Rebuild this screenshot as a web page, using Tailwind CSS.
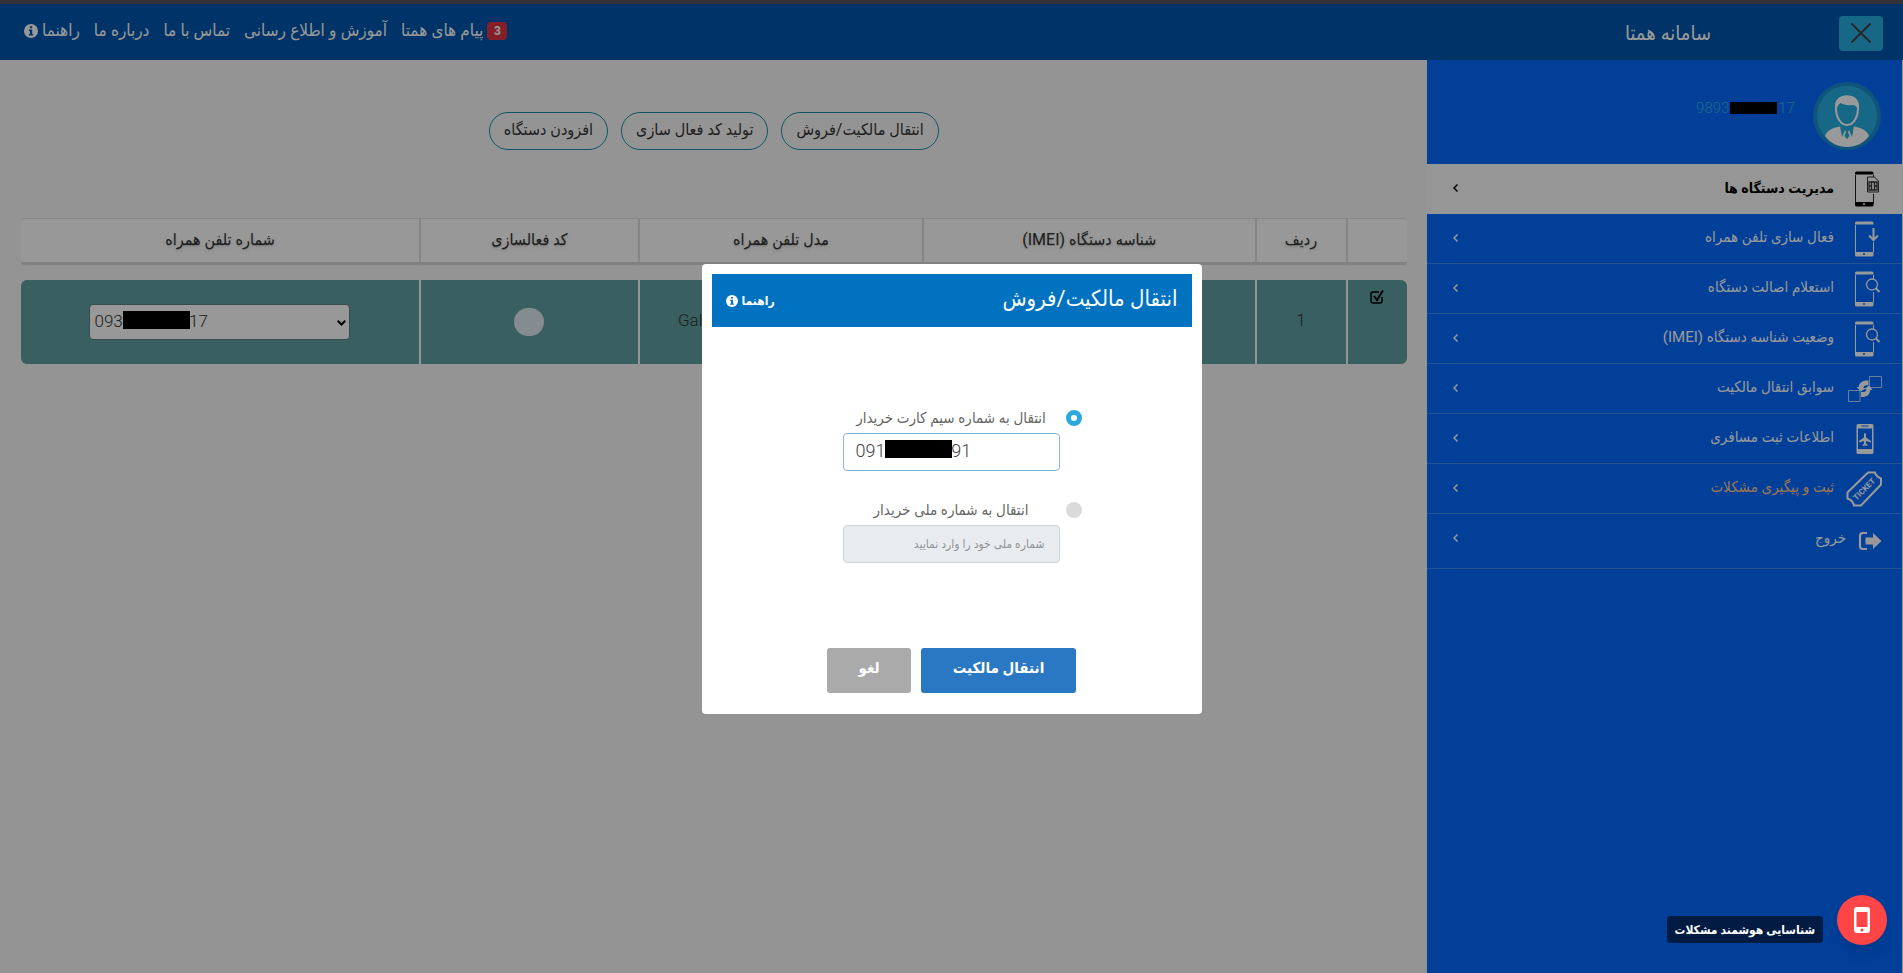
<!DOCTYPE html>
<html lang="fa" dir="rtl">
<head>
    <meta charset="UTF-8">
    <meta name="viewport" content="width=device-width, initial-scale=1.0">
    <title>سامانه همتا</title>
    <script src="https://cdn.jsdelivr.net/npm/@tailwindcss/browser@4"></script>
    <style>
        body {
            font-family: Roboto, 'DejaVu Sans Condensed', 'DejaVu Sans', sans-serif;
        }
    </style>
</head>
<body class="min-h-screen flex flex-col bg-[#f7f7f7] text-[15px] text-[#333]">
    <!-- Top bar -->
    <header class="flex h-[60px] shrink-0 border-t-4 border-[#55555c] bg-[#0055ac] text-white">
        <div class="w-1/4 flex items-center pt-0.5 pr-5">
            <button type="button" aria-label="بستن منو" class="flex h-[35px] w-11 items-center justify-center rounded bg-[#27aee0]">
                <svg class="size-5" viewBox="0 0 20 20" fill="none" stroke="#444" stroke-width="2"><path d="M0.500 0.500L19.500 19.500M19.500 0.500L0.500 19.500"/></svg>
            </button>
            <h1 class="mr-32 text-xl">سامانه همتا</h1>
        </div>
        <nav class="flex flex-1 items-center justify-end gap-3.5 pl-6 pb-0.5 text-[17px]">
            <a href="#" class="flex items-center gap-1">
                <span class="flex h-[18px] w-5 items-center justify-center rounded bg-[#dc3545] text-xs font-bold">3</span>
                پیام های همتا
            </a>
            <a href="#">آموزش و اطلاع رسانی</a>
            <a href="#">تماس با ما</a>
            <a href="#">درباره ما</a>
            <a href="#" class="flex items-center gap-1">
                راهنما
                <svg class="size-[14px]" viewBox="0 0 14 14"><circle cx="7" cy="7" r="7" fill="#fff"/><path d="M5.800 2.200h2.400v2H5.800zM4.900 5.400h3.300v4.600h1v1.500H4.900V10h1V6.900h-1z" fill="#0055ac"/></svg>
            </a>
        </nav>
    </header>

    <div class="flex flex-1 pr-px">
        <!-- Sidebar -->
        <aside class="w-1/4 bg-[#036aff] text-white">
            <div class="flex h-[104px] gap-[17px] pr-5 pt-5">
                <svg class="size-[70px]" viewBox="0 0 70 70">
                    <circle cx="35" cy="36" r="34" fill="#1a8ccf"/>
                    <circle cx="35" cy="36" r="30" fill="#27aee0"/>
                    <path d="M13 56c2-6 8-8 15-9.500L35 52l7-5.500c7 1.500 13 3.500 15 9.500-5 7-13 11-22 11s-17-4-22-11z" fill="#fff"/>
                    <path d="M28 46l5 4-3 7zM42 46l-5 4 3 7zM33.500 49h3l-.5 3 1.500 4-2.500 3-2.500-3 1.500-4z" fill="#27aee0"/>
                    <path d="M24 28c0-8 4-11.500 11-11.500S46 20 46 28c0 10-5 17-11 17s-11-7-11-17z" fill="#27aee0" stroke="#fff" stroke-width="2"/>
                    <path d="M23.500 31c-2-9 2-15.500 11.500-15.500S48.500 22 46.500 31c-1-3-2-5-5-6-6 1-11-1-13-2-3 2-4 5-5 8z" fill="#fff"/>
                </svg>
                <div dir="ltr" class="flex h-5 mt-[18px] items-center font-light text-[#30b4e8]">
                    <span>9893</span><span class="mx-px h-3 w-[47px] bg-black"></span><span>17</span>
                </div>
            </div>
            <ul>
                <li class="bg-[#fbfbfb] text-sm font-bold text-black">
                    <a href="#" class="flex h-[50px] items-center pr-5 pl-[26px]">
                        <svg class="ml-3 h-9 w-9" viewBox="0 0 36 36"><path d="M9.500 4v28M27.500 4v5M27.500 23v10" stroke="#222" fill="none"/><path d="M9 2q0-1.500 1.500-1.500h15.500q1.500 0 1.500 1.500v1.500H9zM9 31h18.500v3q0 1.500-1.500 1.500H10.500Q9 35.500 9 34z" fill="#000"/><circle cx="18" cy="33" r="1" fill="#fff"/><path d="M21.500 6h7l4 4v11h-11z" fill="#fbfbfb" stroke="#333"/><path d="M23 11h8v8h-8zM25.500 11v8M28.500 11v8M23 15h2.500M28.500 15H31" stroke="#333" fill="none" stroke-width="1.300"/></svg>
                        <span class="flex-1 pb-0.5">مدیریت دستگاه ها</span>
                        <svg class="mb-0.5 h-2 w-[5px]" viewBox="0 0 5 8" fill="none" stroke="currentColor" stroke-width="1.500"><path d="M4.500 .5L1 4l3.500 3.500"/></svg>
                    </a>
                </li>
                <li>
                    <a href="#" class="flex h-[50px] items-center border-b border-[#3b8cf0] pr-5 pl-[26px]">
                        <svg class="ml-3 h-9 w-9" viewBox="0 0 36 36" fill="none" stroke="#fff"><path d="M9.500 4v28M27.500 21v10"/><path d="M9 2q0-1.500 1.500-1.500h15.500q1.500 0 1.500 1.500v1.500H9zM9 31h18.500v3q0 1.500-1.500 1.500H10.500Q9 35.500 9 34z" fill="#fff" stroke="none"/><circle cx="18" cy="33" r="1" fill="#036aff" stroke="none"/><path d="M27.500 7v12M23 14.500l4.500 4.500 4.500-4.500" stroke-width="2"/></svg>
                        <span class="flex-1 pb-0.5">فعال سازی تلفن همراه</span>
                        <svg class="mb-0.5 h-2 w-[5px]" viewBox="0 0 5 8" fill="none" stroke="currentColor" stroke-width="1.500"><path d="M4.500 .5L1 4l3.500 3.500"/></svg>
                    </a>
                </li>
                <li>
                    <a href="#" class="flex h-[50px] items-center border-b border-[#3b8cf0] pr-5 pl-[26px]">
                        <svg class="ml-3 h-9 w-9" viewBox="0 0 36 36" fill="none" stroke="#fff"><path d="M9.500 4v28M27.500 4v4M27.500 21v10"/><path d="M9 2q0-1.500 1.500-1.500h15.500q1.500 0 1.500 1.500v1.500H9zM9 31h18.500v3q0 1.500-1.500 1.500H10.500Q9 35.500 9 34z" fill="#fff" stroke="none"/><circle cx="18" cy="33" r="1" fill="#036aff" stroke="none"/><circle cx="26" cy="13.500" r="5.500" stroke-width="1.300"/><path d="M30 17.500l3.500 3.500" stroke-width="2"/></svg>
                        <span class="flex-1 pb-0.5">استعلام اصالت دستگاه</span>
                        <svg class="mb-0.5 h-2 w-[5px]" viewBox="0 0 5 8" fill="none" stroke="currentColor" stroke-width="1.500"><path d="M4.500 .5L1 4l3.500 3.500"/></svg>
                    </a>
                </li>
                <li>
                    <a href="#" class="flex h-[50px] items-center border-b border-[#3b8cf0] pr-5 pl-[26px]">
                        <svg class="ml-3 h-9 w-9" viewBox="0 0 36 36" fill="none" stroke="#fff"><path d="M9.500 4v28M27.500 4v4M27.500 21v10"/><path d="M9 2q0-1.500 1.500-1.500h15.500q1.500 0 1.500 1.500v1.500H9zM9 31h18.500v3q0 1.500-1.500 1.500H10.500Q9 35.500 9 34z" fill="#fff" stroke="none"/><circle cx="18" cy="33" r="1" fill="#036aff" stroke="none"/><circle cx="26" cy="13.500" r="5.500" stroke-width="1.300"/><path d="M30 17.500l3.500 3.500" stroke-width="2"/></svg>
                        <span class="flex-1 pb-0.5">وضعیت شناسه دستگاه (IMEI)</span>
                        <svg class="mb-0.5 h-2 w-[5px]" viewBox="0 0 5 8" fill="none" stroke="currentColor" stroke-width="1.500"><path d="M4.500 .5L1 4l3.500 3.500"/></svg>
                    </a>
                </li>
                <li>
                    <a href="#" class="flex h-[50px] items-center border-b border-[#3b8cf0] pr-5 pl-[26px]">
                        <svg class="ml-3 h-9 w-9" viewBox="0 0 36 36" fill="none" stroke="#b4d2ff"><path d="M23.500 5.500h12v11h-12zM2.500 19.500h11.500v11H2.500z"/><g fill="#fff" stroke="none"><path d="M22.500 9.500v5c-3.500-.5-5 .5-5 2.500h2.500l-5 3.500-4.500-4.500h2.300C13 11.500 17 9 22.500 9.500z"/><path d="M15 26v-5c4 .5 5.500-1 5.500-2.800H18l5-3.700 3.500 4.500h-2.300c-.3 5-3.700 7.500-9.200 7z"/></g></svg>
                        <span class="flex-1 pb-0.5">سوابق انتقال مالکیت</span>
                        <svg class="mb-0.5 h-2 w-[5px]" viewBox="0 0 5 8" fill="none" stroke="currentColor" stroke-width="1.500"><path d="M4.500 .5L1 4l3.500 3.500"/></svg>
                    </a>
                </li>
                <li>
                    <a href="#" class="flex h-[50px] items-center border-b border-[#3b8cf0] pr-5 pl-[26px]">
                        <svg class="ml-3 h-9 w-9" viewBox="0 0 36 36" fill="#fff"><path fill-rule="evenodd" d="M12 3h14q1.500 0 1.500 1.500v27Q27.500 33 26 33H12q-1.500 0-1.500-1.500v-27Q10.500 3 12 3zM12 7.500v20.500h14V7.500z"/><path d="M15.500 5h7" stroke="#036aff"/><path d="M19 12c.8 0 1 1 1 2v2.500l5 3.500v1.500l-5-1.500v2.500l1.500 1.500v1L19 24.500 16.500 25v-1l1.500-1.500V20l-5 1.500V20l5-3.500V14c0-1 .2-2 1-2z"/></svg>
                        <span class="flex-1 pb-0.5">اطلاعات ثبت مسافری</span>
                        <svg class="mb-0.5 h-2 w-[5px]" viewBox="0 0 5 8" fill="none" stroke="currentColor" stroke-width="1.500"><path d="M4.500 .5L1 4l3.500 3.500"/></svg>
                    </a>
                </li>
                <li>
                    <a href="#" class="flex h-[50px] items-center border-b border-[#3b8cf0] pr-5 pl-[26px]">
                        <svg class="ml-3 h-9 w-9" viewBox="0 0 36 36"><path d="M22 1.500h7q1 4 6 6v6L15 34.500H8q-1-5-6.500-7v-6z" fill="none" stroke="#fff" stroke-width="2"/><text x="18" y="21" direction="ltr" text-anchor="middle" transform="rotate(-45 18 18)" font-size="8" font-weight="700" fill="#fff">TICKET</text></svg>
                        <span class="flex-1 pb-0.5 text-[#ffc78a]">ثبت و پیگیری مشکلات</span>
                        <svg class="mb-0.5 h-2 w-[5px]" viewBox="0 0 5 8" fill="none" stroke="currentColor" stroke-width="1.500"><path d="M4.500 .5L1 4l3.500 3.500"/></svg>
                    </a>
                </li>
                <li>
                    <a href="#" class="flex h-[55px] items-center border-b border-[#3b8cf0] pr-5 pl-[26px]">
                        <svg class="ml-3 h-[18px] w-6" viewBox="0 0 24 18"><path d="M9 1H5Q2 1 2 4v10q0 3 3 3h4" fill="none" stroke="#fff" stroke-width="2.200"/><path d="M7.500 5.500H15V1l8.500 8-8.500 8v-4.500H7.500z" fill="#fff"/></svg>
                        <span class="flex-1 pb-1.5">خروج</span>
                        <svg class="mb-1.5 h-2 w-[5px]" viewBox="0 0 5 8" fill="none" stroke="currentColor" stroke-width="1.500"><path d="M4.500 .5L1 4l3.500 3.500"/></svg>
                    </a>
                </li>
            </ul>
        </aside>

        <!-- Devices -->
        <main class="flex-1 pt-[52px] pr-5 pl-[21px]">
            <div class="flex justify-center gap-[13px] text-base">
                <button type="button" class="h-[38px] rounded-full border border-[#1a92a6] px-3.5 pb-0.5">انتقال مالکیت/فروش</button>
                <button type="button" class="h-[38px] rounded-full border border-[#1a92a6] px-3.5 pb-0.5">تولید کد فعال سازی</button>
                <button type="button" class="h-[38px] rounded-full border border-[#1a92a6] px-3.5 pb-0.5">افزودن دستگاه</button>
            </div>

            <table class="mt-[68px] w-full table-fixed border-separate border-spacing-0">
                <colgroup>
                    <col class="w-[61px]">
                    <col class="w-[91px]">
                    <col class="w-[24%]">
                    <col class="w-[20.500%]">
                    <col class="w-[219px]">
                    <col>
                </colgroup>
                <thead class="text-base">
                    <tr class="h-[47px] *:border-y *:border-t-[#e2e2e2] *:border-b-[3px] *:border-b-[#d6d6d6] *:bg-[#fdfdfd] *:font-normal *:pb-0.5 *:text-shadow-md">
                        <th class="rounded-r border-l-2 border-l-[#dedede]"></th>
                        <th class="border-l-2 border-l-[#dedede]">ردیف</th>
                        <th class="border-l-2 border-l-[#dedede]">شناسه دستگاه (IMEI)</th>
                        <th class="border-l-2 border-l-[#dedede]">مدل تلفن همراه</th>
                        <th class="border-l-2 border-l-[#dedede]">کد فعالسازی</th>
                        <th class="rounded-l">شماره تلفن همراه</th>
                    </tr>
                </thead>
                <tbody class="text-center">
                    <tr class="h-[15px]"><td colspan="6"></td></tr>
                    <tr class="h-[84px] *:border-[#f7f7f7] *:bg-[#5f9ea0]">
                        <td class="rounded-r-md border-l-2 align-top">
                            <svg class="mx-auto mt-2.5 size-[14px]" viewBox="0 0 14 14" fill="none" stroke="#000" stroke-width="1.500"><path d="M9 2H3Q1 2 1 4v7q0 2 2 2h7q2 0 2-2V7"/><path d="M4 6l3 4 6-9.500" stroke-width="2"/></svg>
                        </td>
                        <td class="border-l-2 pb-0.5 text-[17px] font-light">1</td>
                        <td class="border-l-2"></td>
                        <td dir="ltr" class="border-l-2 pb-0.5 pl-10 text-left text-[17px] font-light">Galaxy</td>
                        <td class="border-l-2"><button type="button" aria-label="کد فعالسازی" class="mx-auto block h-7 w-[30px] rounded-full bg-[#dce8f2]"></button></td>
                        <td class="rounded-l-md">
                            <div dir="ltr" class="relative mx-auto h-9 w-[261px]">
                                <select aria-label="شماره تلفن همراه" class="h-9 w-full appearance-none rounded border border-[#5a7f80] bg-[#fdfdfd] pl-1 text-[17px] font-light">
                                    <option>093&nbsp;&nbsp;&nbsp;&nbsp;&nbsp;&nbsp;&nbsp;&nbsp;&nbsp;&nbsp;&nbsp;&nbsp;&nbsp;&nbsp;&nbsp;&nbsp;17</option>
                                </select>
                                <span class="absolute top-[7px] left-[34px] h-[18px] w-[67px] bg-black"></span>
                                <svg class="absolute top-4 right-1 h-[6px] w-[9px]" viewBox="0 0 9 6" fill="none" stroke="#000" stroke-width="2"><path d="M.7.700L4.500 4.500 8.300.7"/></svg>
                            </div>
                        </td>
                    </tr>
                </tbody>
            </table>
        </main>
    </div>

    <!-- Transfer dialog -->
    <div class="fixed inset-0 flex items-start justify-center bg-black/40 pt-[264px]">
        <form role="dialog" aria-labelledby="dialog-title" class="flex w-[500px] flex-col rounded bg-white p-2.5 pb-[21px]">
            <div class="flex h-[53px] items-center justify-between bg-[#0072bf] pr-3.5 pl-[14px] text-white">
                <h2 id="dialog-title" class="pb-1 text-[22px]">انتقال مالکیت/فروش</h2>
                <a href="#" class="flex items-center gap-1 text-xs font-bold">
                    راهنما
                    <svg class="size-3" viewBox="0 0 14 14"><circle cx="7" cy="7" r="7" fill="#fff"/><path d="M5.800 2.200h2.400v2H5.800zM4.900 5.400h3.300v4.600h1v1.500H4.900V10h1V6.900h-1z" fill="#0072bf"/></svg>
                </a>
            </div>

            <div class="mt-20 mr-[110px] flex flex-col gap-7 text-[#666]">
                <div class="flex gap-1.5">
                    <input type="radio" id="by-sim" name="target" checked class="mt-[3px] size-4 appearance-none rounded-full border-[5px] border-[#2ba8dc] bg-white">
                    <div class="w-[217px]">
                        <label for="by-sim" class="block h-[26px] text-center">انتقال به شماره سیم کارت خریدار</label>
                        <div dir="ltr" class="relative">
                            <input type="text" aria-label="شماره سیم کارت خریدار" value="091&nbsp;&nbsp;&nbsp;&nbsp;&nbsp;&nbsp;&nbsp;&nbsp;&nbsp;&nbsp;&nbsp;&nbsp;&nbsp;&nbsp;&nbsp;91" class="h-[38px] w-full rounded border border-[#7fb8dc] px-3 pb-1 text-lg font-light text-[#444]">
                            <span class="absolute top-[7px] left-[42px] h-[18px] w-[67px] bg-black"></span>
                        </div>
                    </div>
                </div>
                <div class="flex gap-1.5">
                    <input type="radio" id="by-national" name="target" class="mt-[3px] size-4 appearance-none rounded-full bg-[#dadada]">
                    <div class="w-[217px]">
                        <label for="by-national" class="block h-[26px] text-center">انتقال به شماره ملی خریدار</label>
                        <input type="text" disabled aria-label="شماره ملی خریدار" placeholder="شماره ملی خود را وارد نمایید" class="h-[38px] w-full rounded border border-[#ced4da] bg-[#e9ecef] px-[14px] text-xs placeholder:text-[#909498]">
                    </div>
                </div>
            </div>

            <div class="mt-[85px] flex justify-center gap-2.5 font-bold text-white">
                <button type="submit" class="h-[45px] w-[155px] rounded-[3px] bg-[#2a77c3] pb-1">انتقال مالکیت</button>
                <button type="button" class="h-[45px] w-21 rounded-[3px] bg-[#aaa] pb-1">لغو</button>
            </div>
        </form>
    </div>

    <!-- Smart troubleshooting button -->
    <div class="fixed right-4 bottom-7 flex items-end gap-[14px]">
        <button type="button" aria-labelledby="fab-label" class="flex size-[50px] items-center justify-center rounded-full bg-[#ff4545] shadow-lg">
            <svg class="h-[26px] w-4" viewBox="0 0 16 26"><rect width="16" height="26" rx="3" fill="#fff"/><path d="M2.500 5h11v15h-11z" fill="#ff4545"/><circle cx="8" cy="23" r="1.500" fill="#ff4545"/></svg>
        </button>
        <span id="fab-label" class="mb-0.5 flex h-[27px] items-center rounded bg-[#021b42] px-2 text-xs font-bold text-white">شناسایی هوشمند مشکلات</span>
    </div>
</body>
</html>
